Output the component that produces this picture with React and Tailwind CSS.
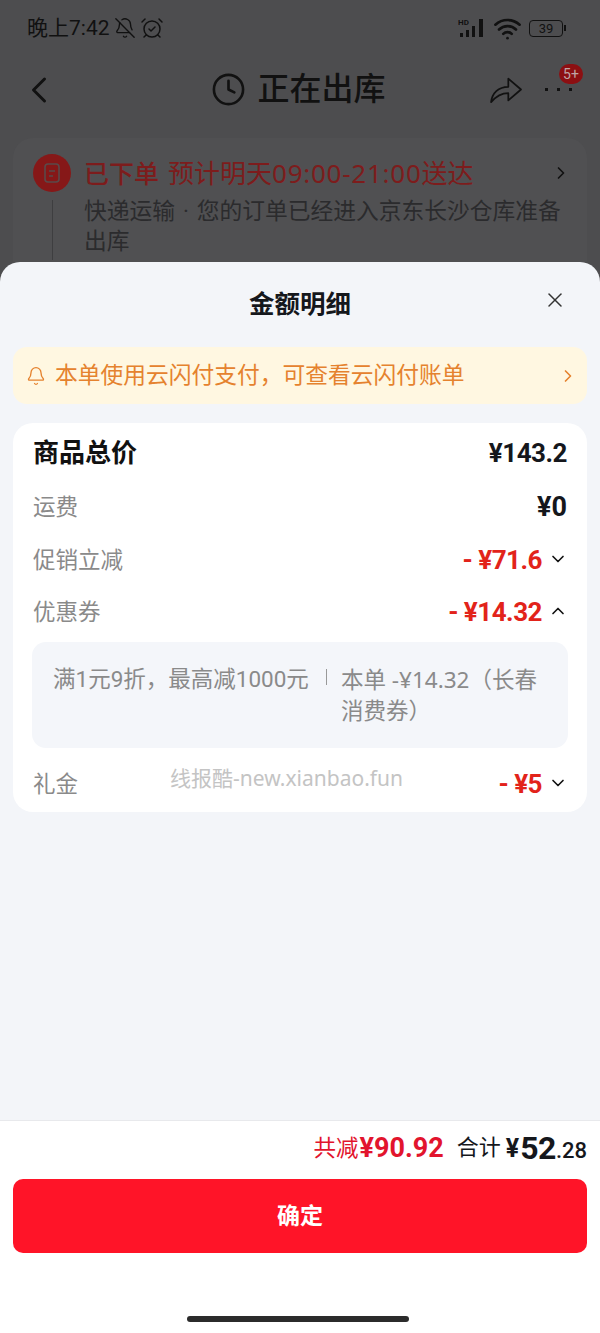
import { ChevronDown, ChevronUp, ChevronRight, ChevronLeft, X, Bell, Clock, BellOff, AlarmClockCheck, Wifi } from 'lucide-react';

const font = { fontFamily: 'Roboto, "Noto Sans CJK SC", sans-serif' };
const wideFont = { fontFamily: '"Noto Sans", "Noto Sans CJK SC", sans-serif' };

const Row = ({ label, value, open, className }) => (
  <div className={`flex items-center justify-between ${className}`}>
    <span className="text-[22.5px] leading-[30px] text-[#8a8a8a]">{label}</span>
    <div className="flex items-center">
      <span className="text-[26px] leading-[30px] font-bold tracking-[-0.5px] text-[#e2231a]">{value}</span>
      <span className="w-[26px] flex justify-end -mt-[2px] -mr-[1px]">
        {open ? <ChevronUp size={20} strokeWidth={2} className="text-[#111]" /> : <ChevronDown size={20} strokeWidth={2} className="text-[#111]" />}
      </span>
    </div>
  </div>
);

const App = () => {
  return (
    <div style={font} className="w-[600px] h-[1333px] flex flex-col bg-[#4d4d4f] overflow-hidden">
      {/* dimmed order page */}
      <div className="h-[262px] shrink-0 overflow-hidden">
        <div className="h-[56px] px-[27px] flex items-center justify-between text-[#111]">
          <div className="flex items-center gap-[4px]">
            <span className="text-[21px] leading-none">晚上7:42</span>
            <BellOff size={22} strokeWidth={1.5} />
            <AlarmClockCheck size={24} strokeWidth={1.5} />
          </div>
          <div className="flex items-center gap-[7px] pr-[7px]">
            <svg width="28" height="20" viewBox="0 0 28 20" fill="#111">
              <text x="0" y="7" fontSize="8" fontWeight="700">HD</text>
              <rect x="2" y="15" width="3" height="4" />
              <rect x="8" y="12" width="3" height="7" />
              <rect x="14" y="8" width="3" height="11" />
              <rect x="21" y="1" width="4" height="18" />
            </svg>
            <Wifi size={29} strokeWidth={2.2} />
            <div className="flex items-center">
              <div className="w-[34px] h-[17px] border border-[#111] rounded-[4px] text-[13px] leading-[15px] text-center">39</div>
              <div className="w-[2px] h-[6px] bg-[#111] ml-[1px]" />
            </div>
          </div>
        </div>
        <div className="h-[70px] relative flex items-center justify-center text-[#111] pb-[4px] pr-[3px]">
          <ChevronLeft size={44} strokeWidth={1.6} className="absolute left-[17px] top-[12px]" />
          <Clock size={35} strokeWidth={1.8} className="mr-[11px]" />
          <span className="text-[32px] leading-none font-medium">正在出库</span>
          <svg width="33" height="29" viewBox="0 0 36 32" fill="none" stroke="#111" strokeWidth="1.9" strokeLinejoin="round" className="absolute left-[490px] top-[19px]">
            <path d="M1 30 C2 20 9 13 20 13 L20 4 L34 16 L20 28 L20 20 C12 20 6 24 1 30 Z" />
          </svg>
          <div className="absolute left-[545px] top-[32px] flex gap-[9px]">
            <div className="w-[3px] h-[3px] bg-[#111]" />
            <div className="w-[3px] h-[3px] bg-[#111]" />
            <div className="w-[3px] h-[3px] bg-[#111]" />
          </div>
          <div className="absolute left-[559px] top-[8px] w-[24px] h-[20px] rounded-full bg-[#8c0f12] text-[#bfa5a5] text-[14px] leading-[20px] text-center">5+</div>
        </div>
        <div className="mx-[13px] mt-[12px] h-[140px] rounded-t-[20px] bg-[#505052] pl-[20px] pr-[22px] pt-[16px] flex gap-[13px]">
          <div className="shrink-0 flex flex-col items-center">
            <div className="w-[38px] h-[38px] rounded-full bg-[#861818] flex items-center justify-center">
              <svg width="20" height="24" viewBox="0 0 20 24" fill="none" stroke="#5a4a4a" strokeWidth="1.6">
                <rect x="3" y="3" width="14" height="18" rx="3" />
                <path d="M7 10h6M7 15h4" />
              </svg>
            </div>
            <div className="w-px h-[60px] mt-[8px] bg-[#3e3e40]" />
          </div>
          <div className="flex-1 min-w-0">
            <div className="flex items-center justify-between h-[38px]">
              <div className="text-[26px] leading-none text-[#7d1c1c] whitespace-nowrap">
                <span className="text-[25px] font-medium mr-[9px]">已下单</span>预计明天<span style={wideFont} className="tracking-[0.75px]">09:00-21:00</span>送达
              </div>
              <ChevronRight size={20} strokeWidth={2} className="text-[#111] -mr-[6px]" />
            </div>
            <p className="text-[22.75px] leading-[30px] text-[#2b2b2d] mt-[5px]">{'快递运输\u00a0\u200a·\u00a0\u200a您的订单已经进入京东长沙仓库准备出库'}</p>
          </div>
        </div>
      </div>

      {/* amount sheet */}
      <div className="flex-1 relative rounded-t-[20px] bg-[#f3f5f9] flex flex-col min-h-0">
        <div className="h-[85px] shrink-0 relative flex items-start justify-center pt-[26px]">
          <span className="text-[25.5px] leading-[32px] font-bold text-[#15171c]">金额明细</span>
          <X size={24} strokeWidth={1.5} className="absolute left-[543px] top-[26px] text-[#333]" />
        </div>
        <div className="mx-[13px] h-[57px] shrink-0 rounded-[14px] bg-[#fff7e1] flex items-center pl-[13px] pr-[9px] text-[#e5822e]">
          <Bell size={20} strokeWidth={1.6} />
          <span className="text-[22.75px] leading-none ml-[9px] pt-[1px] flex-1">本单使用云闪付支付，可查看云闪付账单</span>
          <ChevronRight size={20} strokeWidth={2} />
        </div>

        <div className="relative mx-[13px] mt-[19px] h-[389px] shrink-0 rounded-[20px] bg-white px-[20px] pt-[14px]">
          <div className="flex items-center justify-between">
            <span className="text-[26px] leading-[32px] font-bold text-[#111]">商品总价</span>
            <span className="text-[26px] leading-[32px] font-bold tracking-[-0.5px] text-[#15171c]">¥143.2</span>
          </div>
          <div className="flex items-center justify-between mt-[23px]">
            <span className="text-[22.5px] leading-[30px] text-[#8a8a8a]">运费</span>
            <span className="text-[27px] leading-[30px] font-bold text-[#15171c]">¥0</span>
          </div>
          <Row label="促销立减" value="- ¥71.6" className="mt-[23px]" />
          <Row label="优惠券" value="- ¥14.32" open className="mt-[22px]" />
          <div className="-mx-px mt-[15px] h-[106px] rounded-[14px] bg-[#f4f6fa] pl-[21px] pr-[20px] pt-[22px] flex text-[22.5px] leading-[31px] text-[#8a8a8a]">
            <span className="w-[259px] shrink-0 whitespace-nowrap">满1元9折，最高减1000元</span>
            <span className="w-[29px] shrink-0 flex justify-center pt-[5px]"><span className="w-px h-[16px] bg-[#999]" /></span>
            <span style={wideFont} className="flex-1">本单 -¥14.32（长春消费券）</span>
          </div>
          <Row label="礼金" value="- ¥5" className="mt-[21px]" />
          <span style={wideFont} className="absolute left-[157px] top-[342px] text-[21px] leading-[26px] text-[#c4c4c4] whitespace-nowrap">线报酷-new.xianbao.fun</span>
        </div>

        <div className="mt-auto h-[213px] shrink-0 bg-white border-t border-[#e8e9ec] flex flex-col">
          <div className="h-[58px] shrink-0 flex items-center justify-end pr-[13px] pb-[4px] text-[#15171c]">
            <span className="text-[22.5px] leading-none text-[#e2142d]">共减</span>
            <span className="text-[27px] leading-none font-bold text-[#e2142d] ml-[1px]">¥90.92</span>
            <span className="text-[22px] leading-none ml-[13px]">合计</span>
            <span className="text-[25px] leading-none font-bold ml-[5px] mr-[1px]">¥</span>
            <span className="text-[32px] leading-none font-bold tracking-[-0.5px]">52</span>
            <span className="text-[22px] leading-none font-medium pt-[5px]">.28</span>
          </div>
          <button className="mx-[13px] h-[74px] shrink-0 rounded-[10px] bg-[#ff1428] text-white text-[23px] font-bold pt-[3px]">确定</button>
          <div className="mt-[63px] ml-[187px] w-[222px] h-[6px] rounded-full bg-[#2b2b2b]" />
        </div>
      </div>
    </div>
  );
};

export default App;
